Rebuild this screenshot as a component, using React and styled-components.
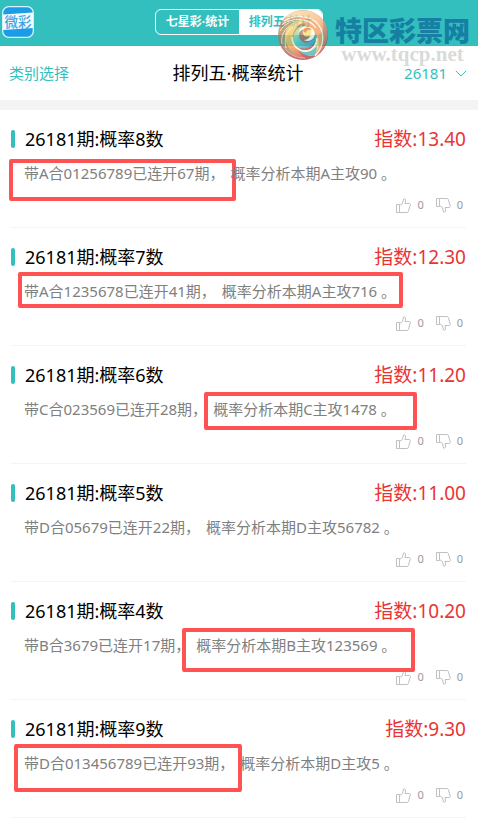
import React from 'react'
import styled, {createGlobalStyle} from 'styled-components'

const teal = '#32bfbe'
const sans = '"Noto Sans", "Noto Sans CJK SC", sans-serif'

const GlobalStyle = createGlobalStyle`
  * { box-sizing: border-box; }
  body {
    margin: 0;
    background: #fff;
    font-family: ${sans};
  }
  button {
    font-family: inherit;
    padding: 0;
    border: 0;
    background: none;
    cursor: pointer;
  }
`

const Page = styled.div`
  position: relative;
  overflow: hidden;
`

const Header = styled.header`
  display: grid;
  grid-template-columns: 1fr auto 1fr;
  align-items: center;
  height: 46px;
  padding: 0 2px 2px;
  background: ${teal};
`

const HomeLink = styled.a`
  display: block;
  width: 32px;
  height: 32px;
`

const Tabs = styled.nav`
  display: flex;
  height: 26px;
  border: 1px solid #fff;
  border-radius: 6px;
  overflow: hidden;
`

const Tab = styled.button`
  width: 83px;
  font-size: 12px;
  font-weight: 700;
  line-height: 24px;
  color: ${p => (p.$active ? teal : '#fff')};
  background: ${p => (p.$active ? '#fff' : 'transparent')};
`

const SubBar = styled.div`
  display: grid;
  grid-template-columns: 1fr auto 1fr;
  align-items: center;
  height: 54px;
  padding: 0 11px 0 9px;
`

const BarButton = styled.button`
  display: flex;
  align-items: center;
  gap: 8px;
  justify-self: ${p => (p.$end ? 'end' : 'start')};
  font-size: 15px;
  line-height: 24px;
  color: ${teal};
`

const PageTitle = styled.h1`
  margin: 0;
  font-size: 18px;
  font-weight: 400;
  line-height: 24px;
  color: #000;
`

const List = styled.main`
  border-top: 10px solid #f4f4f4;
  padding: 0 12px 0 11px;
`

const Item = styled.article`
  height: 118px;
  padding-top: 17px;
  border-bottom: 1px solid #f4f4f4;
`

const ItemHead = styled.div`
  display: flex;
  align-items: center;
  justify-content: space-between;
  height: 24px;
`

const ItemTitle = styled.h2`
  display: flex;
  align-items: center;
  gap: 10px;
  margin: 0;
  font-size: 18px;
  font-weight: 400;
  line-height: 24px;
  color: #000;

  &::before {
    content: '';
    width: 4px;
    height: 18px;
    border-radius: 2px;
    background: ${teal};
  }
`

const Score = styled.span`
  font-size: 19px;
  line-height: 24px;
  color: #e93434;
`

const Note = styled.p`
  position: relative;
  display: flex;
  gap: 6px;
  width: max-content;
  margin: 10px 0 0 13px;
  font-size: 15px;
  line-height: 24px;
  color: #808080;
`

const Phrase = styled.span`
  position: relative;
`

// highlight frame laid over the text
const Mark = styled.span`
  position: absolute;
  top: ${p => p.$box[0]}px;
  right: ${p => p.$box[1]}px;
  bottom: ${p => p.$box[2]}px;
  left: ${p => p.$box[3]}px;
  border: 4px solid #ff5353;
  border-radius: 2px;
`

const Votes = styled.div`
  display: flex;
  justify-content: flex-end;
  gap: 12px;
  margin-top: 12px;
  padding-right: 3px;
`

const Vote = styled.button`
  display: flex;
  align-items: center;
  gap: 6px;
  font-size: 11px;
  line-height: 16px;
  color: #999;
`

const Watermark = styled.div`
  position: absolute;
  top: 9px;
  right: 8px;
  display: flex;
  gap: 6px;
  pointer-events: none;
`

const SiteName = styled.div`
  font-family: "Noto Sans CJK SC", sans-serif;
  font-size: 27px;
  font-weight: 900;
  line-height: 32px;
  margin-top: 5px;
  color: #1680a2;
`

const SiteUrl = styled.div`
  font-family: "Liberation Serif", serif;
  font-size: 21px;
  font-weight: 700;
  line-height: 16px;
  text-align: center;
  color: rgba(196, 196, 196, 0.65);
`

const AppLogo = () => (
  <svg width="32" height="32" viewBox="0 0 32 32">
    <rect x=".7" y=".7" width="30.6" height="30.6" rx="6" fill="#1b9ce6" stroke="#d9f3f8" strokeWidth="1.3" />
    <path d="M1 8.5 31 6.500v15.500L1 24z" fill="#f3faff" />
    <text x="2.500" y="20.500" fontSize="13.500" fontWeight="500" fontFamily="Noto Sans CJK SC, sans-serif" fill="#3fa3e0">微彩</text>
  </svg>
)

const SwirlLogo = () => (
  <svg width="52" height="52" viewBox="0 0 52 52" opacity=".76">
    <defs>
      <linearGradient id="rim" x1="0" y1="0" x2=".4" y2="1">
        <stop offset="0" stopColor="#d8a860" />
        <stop offset=".5" stopColor="#a67a66" />
        <stop offset="1" stopColor="#b03c40" />
      </linearGradient>
      <linearGradient id="peach" x1="0" y1="0" x2=".8" y2="1">
        <stop offset="0" stopColor="#f9e2a8" />
        <stop offset=".5" stopColor="#f6b980" />
        <stop offset="1" stopColor="#cc4f48" />
      </linearGradient>
      <linearGradient id="gold" x1=".3" y1="0" x2=".5" y2="1">
        <stop offset="0" stopColor="#f7de6c" />
        <stop offset=".6" stopColor="#f4b04c" />
        <stop offset="1" stopColor="#e2553a" />
      </linearGradient>
      <linearGradient id="sea" x1="0" y1="0" x2="1" y2="1">
        <stop offset="0" stopColor="#f5e878" />
        <stop offset=".45" stopColor="#5ec6c0" />
        <stop offset="1" stopColor="#1f8fc4" />
      </linearGradient>
    </defs>
    <circle cx="26" cy="26" r="25" fill="url(#rim)" />
    {/* right hand blades, outermost first */}
    <path d="M8 9C20-3 41 0 48 14c6 13 1 26-10 34 6-8 8-16 6-24C42 10 26 4 8 9z" fill="url(#peach)" />
    <path d="M5 15C15 5 35 5 42 18c6 11 3 22-5 30 3-8 4-17 0-23C32 14 17 11 5 15z" fill="#f59c5c" />
    <path d="M7 12C20 4 38 7 44 20c4 10 1 20-6 27M5 16c11-8 28-7 34 3" fill="none" stroke="#fff3dc" strokeWidth="1.300" />
    {/* left hand blades curling under the core */}
    <path d="M4 17c6-5 14-7 22-5C14 14 9 21 10 29c1 9 7 16 16 19C14 48 3 39 3 27c0-4 0-7 1-10z" fill="#a98560" />
    <path d="M27 13C15 12 7 19 8 29c1 9 8 17 19 20-4-6-10-11-11-19-1-7 4-14 11-17z" fill="url(#gold)" />
    <path d="M3 22c4-7 12-11 22-10M5 35C3 24 11 14 24 12M9 39C6 27 12 17 24 14" fill="none" stroke="#fbe6bc" strokeWidth="1" />
    {/* blue wave and the bottom lobes */}
    <path d="M39 23c2 8-2 14-9 16-8 2-14-3-14-10 1-8 7-13 14-12-5 2-8 5-8 10 1 6 6 8 10 6 4-1 6-5 7-10z" fill="url(#sea)" />
    <path d="M16 30c2 9 9 13 16 11 6-2 9-8 8-15 3 7 2 16-4 21-8 0-18-6-20-17z" fill="#f3dc7a" />
    <path d="M20 39c6 6 14 5 20-2 0 4-1 8-4 10-7 0-13-3-16-8z" fill="#43b2bd" />
    <path d="M15 28c0 9 7 15 15 14 6-1 10-7 10-13" fill="none" stroke="#fffbe8" strokeWidth="1.600" />
    <path d="M8 40c5 6 12 9 20 9" fill="none" stroke="#e9a596" strokeWidth="1" />
    {/* core */}
    <path d="M21 25c1-6 6-9 11-7 5 1 7 6 5 10-2 4-7 5-10 3 4 0 7-3 6-7-2-5-9-5-12 1z" fill="#fffdf2" />
    <circle cx="30" cy="23" r="4.500" fill="#f8e06a" />
    <path d="M26 22c1-4 6-5 9-1-3-1-6 0-6 3z" fill="#ea7a3f" />
  </svg>
)

const Thumb = ({down}) => (
  <svg width="15" height="15" viewBox="0 0 15 15" fill="none" stroke="#c0c0c0" strokeLinejoin="round">
    <g transform={down ? 'matrix(1 0 0 -1 0 15)' : undefined}>
      <path d="M.500 6.500h3v8h-3zM3.500 7.500 6.500 5.500 7.500 1c1.500-.6 2.300.4 2.100 2L9 5.500h4.300c.9 0 1.200.7 1 1.500l-2 6.500c-.2.7-.6 1-1.200 1H3.500" />
    </g>
  </svg>
)

const Chevron = () => (
  <svg width="12" height="7" viewBox="0 0 12 7" fill="none" stroke={teal}>
    <path d="M.8.8 6 6 11.200.8" />
  </svg>
)

// mark: which part is highlighted and how far the frame reaches past it (top, right, bottom, left)
const items = [
  {name: '概率8数', score: '13.40', run: '带A合01256789已连开67期，', pick: '概率分析本期A主攻90 。', mark: {on: 'run', box: [-2, -12, -16, -15]}},
  {name: '概率7数', score: '12.30', run: '带A合1235678已连开41期，', pick: '概率分析本期A主攻716 。', mark: {on: 'all', box: [-7, -7, -5, -6]}},
  {name: '概率6数', score: '11.20', run: '带C合023569已连开28期，', pick: '概率分析本期C主攻1478 。', mark: {on: 'pick', box: [-5, -21, -9, -9]}},
  {name: '概率5数', score: '11.00', run: '带D合05679已连开22期，', pick: '概率分析本期D主攻56782 。'},
  {name: '概率4数', score: '10.20', run: '带B合3679已连开17期，', pick: '概率分析本期B主攻123569 。', mark: {on: 'pick', box: [-5, -19, -15, -14]}},
  {name: '概率9数', score: '9.30', run: '带D合013456789已连开93期，', pick: '概率分析本期D主攻5 。', mark: {on: 'run', box: [-7, -8, -17, -10]}}
]

const Entry = ({name, score, run, pick, mark}) => {
  const frame = on => mark && mark.on === on && <Mark $box={mark.box} />
  return (
    <Item>
      <ItemHead>
        <ItemTitle>26181期:{name}</ItemTitle>
        <Score>指数:{score}</Score>
      </ItemHead>
      <Note>
        <Phrase>{run}{frame('run')}</Phrase>
        <Phrase>{pick}{frame('pick')}</Phrase>
        {frame('all')}
      </Note>
      <Votes>
        <Vote aria-label="赞"><Thumb />0</Vote>
        <Vote aria-label="踩"><Thumb down />0</Vote>
      </Votes>
    </Item>
  )
}

const App = () => {
  return (
    <Page>
      <GlobalStyle />
      <Header>
        <HomeLink href="#"><AppLogo /></HomeLink>
        <Tabs>
          <Tab>七星彩·统计</Tab>
          <Tab $active>排列五·统计</Tab>
        </Tabs>
      </Header>
      <SubBar>
        <BarButton>类别选择</BarButton>
        <PageTitle>排列五·概率统计</PageTitle>
        <BarButton $end>26181<Chevron /></BarButton>
      </SubBar>
      <List>
        {items.map(item => (
          <Entry key={item.name} {...item} />
        ))}
      </List>
      <Watermark>
        <SwirlLogo />
        <div>
          <SiteName>特区彩票网</SiteName>
          <SiteUrl>www.tqcp.net</SiteUrl>
        </div>
      </Watermark>
    </Page>
  )
}

export default App
